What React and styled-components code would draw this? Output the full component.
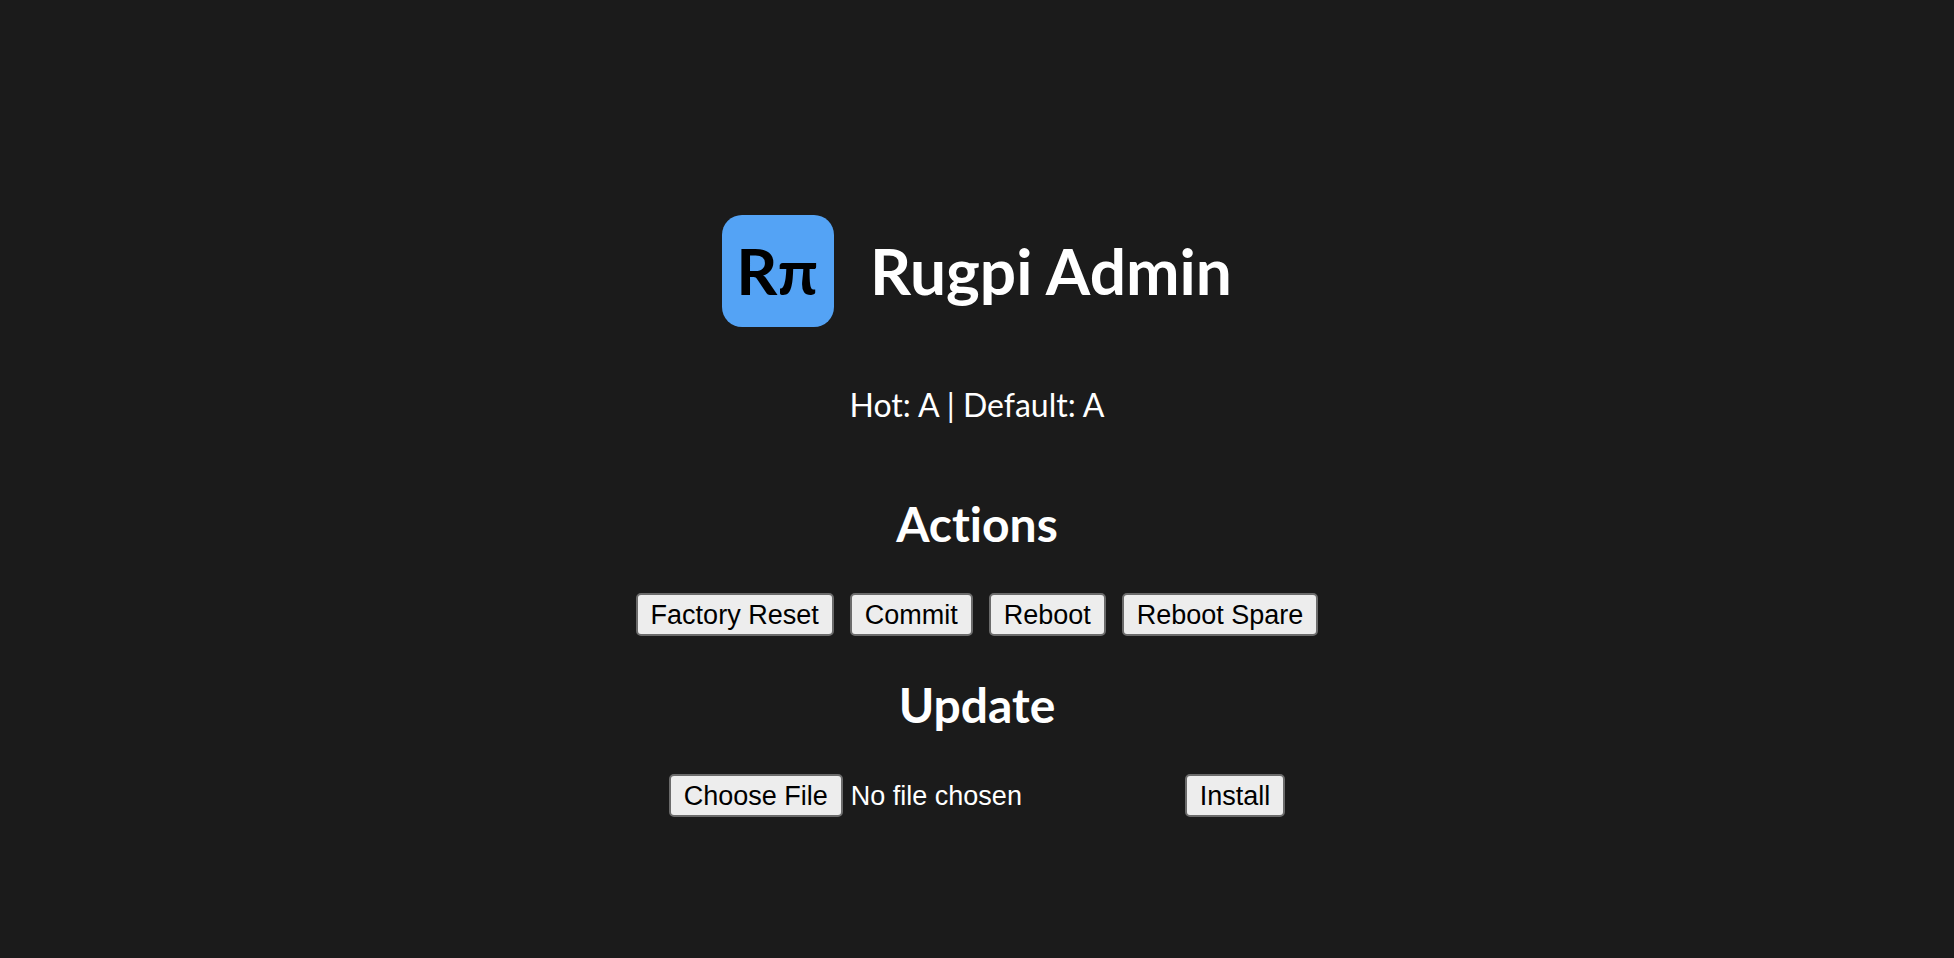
import React from "react";
import styled, { createGlobalStyle, css } from "styled-components";

const GlobalStyle = createGlobalStyle`
  *, *::before, *::after { box-sizing: border-box; }
  body {
    margin: 0;
    background: #1b1b1b;
    color: #ffffff;
    font-family: Lato, "Noto Sans", sans-serif;
    font-variant-ligatures: none;
  }
`;

const Page = styled.main`
  min-height: 100vh;
  display: flex;
  flex-direction: column;
  align-items: center;
  justify-content: center;
  padding: 74px 16px 0;
`;

const Header = styled.header`
  display: flex;
  align-items: center;
  gap: 36px;
`;

const Logo = styled.div`
  display: flex;
  align-items: center;
  justify-content: center;
  width: 112px;
  height: 112px;
  padding-right: 2px;
  border-radius: 20px;
  background: #54a3f5;
  color: #000000;
  font-size: 64px;
  font-weight: 700;
  line-height: 112px;
`;

const Title = styled.h1`
  margin: 0;
  font-size: 64px;
  font-weight: 700;
  line-height: 112px;
`;

const Status = styled.p`
  margin: 56px 0 0;
  font-size: 32px;
  line-height: 44px;
`;

const Section = styled.section`
  display: flex;
  flex-direction: column;
  align-items: center;
`;

const SectionTitle = styled.h2`
  margin: ${({ $first }) => ($first ? "62px" : "34px")} 0 34px;
  font-size: 48px;
  font-weight: 700;
  line-height: 70px;
`;

const Row = styled.div`
  display: flex;
  flex-wrap: wrap;
  align-items: center;
  justify-content: center;
  gap: 16px;
`;

const UpdateForm = styled(Row).attrs({ as: "form" })``;

const control = css`
  height: 43px;
  padding: 0 13px;
  border: 2px solid #6b6b6b;
  border-radius: 5px;
  background: #ededed;
  color: #000000;
  font: 27px/36px "Liberation Sans", Arial, sans-serif;
`;

const Button = styled.button`
  ${control}
`;

const FileInput = styled.input`
  width: 500px;
  max-width: 100%;
  height: 43px;
  color: #ffffff;
  font: 27px/43px "Liberation Sans", Arial, sans-serif;

  &::file-selector-button {
    ${control}
    margin: 0 8px 0 0;
  }
`;

const actions = ["Factory Reset", "Commit", "Reboot", "Reboot Spare"];

export default function App() {
  return (
    <>
      <GlobalStyle />
      <Page>
        <Header>
          <Logo>Rπ</Logo>
          <Title>Rugpi Admin</Title>
        </Header>
        <Status>Hot: A | Default: A</Status>
        <Section>
          <SectionTitle $first>Actions</SectionTitle>
          <Row>
            {actions.map((name) => (
              <Button key={name} type="button">{name}</Button>
            ))}
          </Row>
        </Section>
        <Section>
          <SectionTitle id="update-title">Update</SectionTitle>
          <UpdateForm onSubmit={(event) => event.preventDefault()}>
            <FileInput type="file" aria-labelledby="update-title" />
            <Button type="submit">Install</Button>
          </UpdateForm>
        </Section>
      </Page>
    </>
  );
}
